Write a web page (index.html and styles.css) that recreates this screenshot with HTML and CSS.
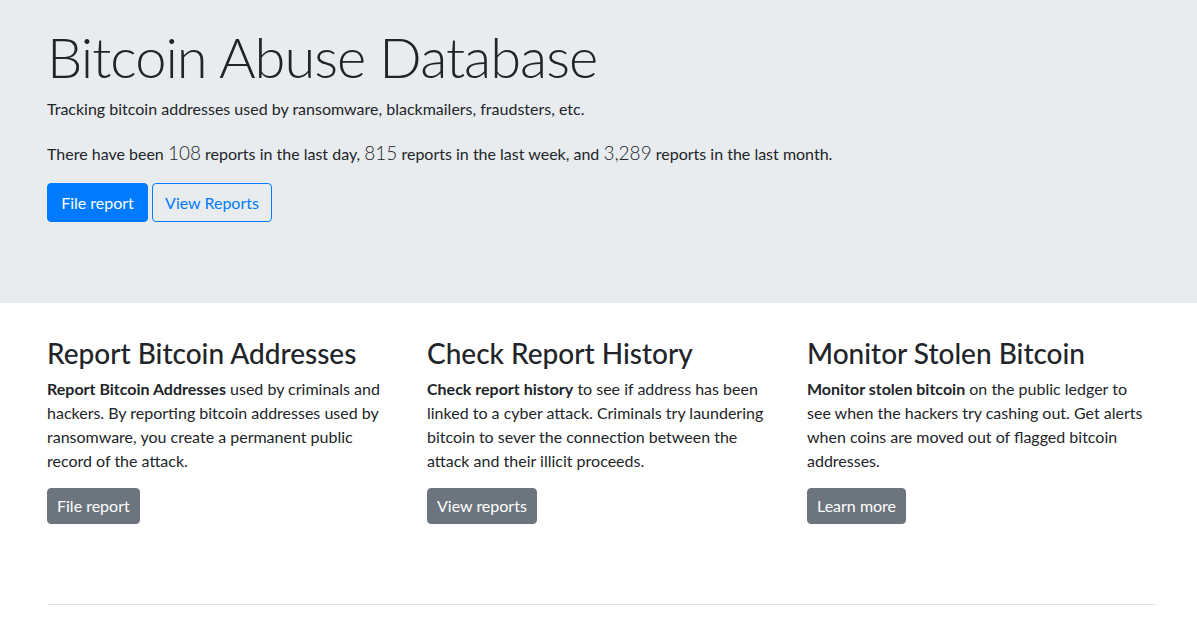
FILE: index.html
```html
<!DOCTYPE html>
<html lang="en">
<head>
<meta charset="utf-8">
<title>Bitcoin Abuse Database</title>
<link rel="stylesheet" href="styles.css">
</head>
<body>
<main>
  <section class="jumbotron">
    <div class="container">
      <h1 class="display">Bitcoin Abuse Database</h1>
      <p class="tagline">Tracking bitcoin addresses used by ransomware, blackmailers, fraudsters, etc.</p>
      <p class="stats">There have been <span class="num">108</span> reports in the last day, <span class="num">815</span> reports in the last week, and <span class="num">3,289</span> reports in the last month.</p>
      <div class="actions">
        <a class="btn btn-primary" href="#">File report</a>
        <a class="btn btn-outline" href="#">View Reports</a>
      </div>
    </div>
  </section>

  <div class="container">
    <div class="row">
      <div class="col">
        <h3>Report Bitcoin Addresses</h3>
        <p><strong>Report Bitcoin Addresses</strong> used by criminals and hackers. By reporting bitcoin addresses used by ransomware, you create a permanent public record of the attack.</p>
        <a class="btn btn-secondary" href="#">File report</a>
      </div>
      <div class="col">
        <h3>Check Report History</h3>
        <p><strong>Check report history</strong> to see if address has been linked to a cyber attack. Criminals try laundering bitcoin to sever the connection between the attack and their illicit proceeds.</p>
        <a class="btn btn-secondary" href="#">View reports</a>
      </div>
      <div class="col">
        <h3>Monitor Stolen Bitcoin</h3>
        <p><strong>Monitor stolen bitcoin</strong> on the public ledger to see when the hackers try cashing out. Get alerts when coins are moved out of flagged bitcoin addresses.</p>
        <a class="btn btn-secondary" href="#">Learn more</a>
      </div>
    </div>
    <hr class="divider">
  </div>
</main>
</body>
</html>
```
FILE: styles.css
```css
* { box-sizing: border-box; }

html, body {
  margin: 0;
  padding: 0;
}

body {
  font-family: Lato, "Open Sans", sans-serif;
  font-size: 16px;
  line-height: 1.5;
  color: #212529;
  background: #fff;
}

.container {
  width: 1110px;
  margin-left: 47px;
}

.jumbotron {
  background: #e9ecef;
  padding: 23px 0 81px;
}

.display {
  margin: 0 0 7px;
  font-size: 56px;
  font-weight: 300;
  line-height: 1.2;
  letter-spacing: -1px;
  color: #212529;
}

.tagline {
  margin: 0 0 18px;
}

.stats {
  margin: 0 0 15px;
}

.num {
  font-size: 19px;
  font-weight: 300;
}

.actions {
  display: flex;
  gap: 4px;
}

.btn {
  display: inline-block;
  font-size: 16px;
  text-decoration: none;
  border: 1px solid transparent;
  border-radius: 4px;
  white-space: nowrap;
  text-align: center;
}

.btn-primary {
  background: #007bff;
  border-color: #007bff;
  color: #fff;
  line-height: 37px;
  width: 101px;
}

.btn-outline {
  background: transparent;
  border-color: #007bff;
  color: #007bff;
  line-height: 37px;
  width: 120px;
}

.row {
  display: grid;
  grid-template-columns: repeat(3, 350px);
  column-gap: 30px;
  padding-top: 34px;
}

.col h3 {
  margin: 0 0 8px;
  font-size: 28px;
  font-weight: 500;
  line-height: 32px;
}

.col p {
  max-width: 340px;
  margin: 0 0 15px;
  line-height: 24px;
}

.col strong {
  font-weight: 700;
}

.btn-secondary {
  background: #6c757d;
  border-color: #6c757d;
  color: #fff;
  line-height: 34px;
  padding: 0 9px;
}

.divider {
  margin: 80px 0 0;
  border: 0;
  border-top: 1px solid rgba(0, 0, 0, 0.1);
}
```
